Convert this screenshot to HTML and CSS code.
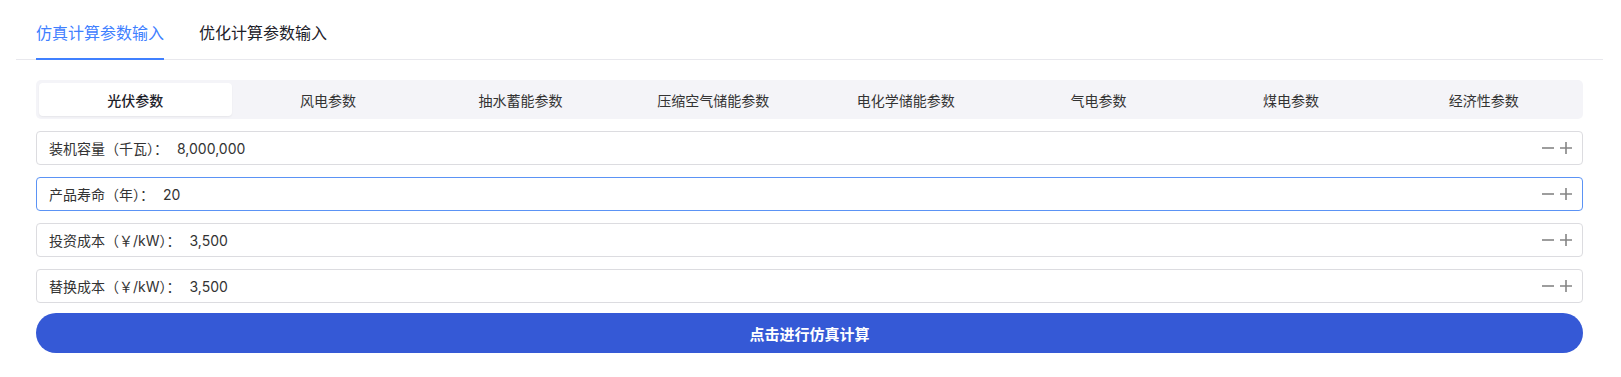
FILE: index.html
```html
<!DOCTYPE html>
<html lang="zh-CN">
<head>
    <meta charset="UTF-8">
    <meta name="viewport" content="width=device-width, initial-scale=1.0">
    <title>参数输入</title>
    <link rel="stylesheet" href="styles.css">
</head>
<body>
    <div class="page">
        <div class="tabs">
            <div class="tab active">仿真计算参数输入</div>
            <div class="tab">优化计算参数输入</div>
        </div>
        <div class="content">
            <div class="segmented">
                <div class="segment selected">光伏参数</div>
                <div class="segment">风电参数</div>
                <div class="segment">抽水蓄能参数</div>
                <div class="segment">压缩空气储能参数</div>
                <div class="segment">电化学储能参数</div>
                <div class="segment">气电参数</div>
                <div class="segment">煤电参数</div>
                <div class="segment">经济性参数</div>
            </div>

            <div class="field">
                <span class="label">装机容量（千瓦）：</span>
                <input class="value" type="text" value="8,000,000">
                <span class="stepper">
                    <svg width="12" height="12" viewBox="0 0 12 12"><path d="M0 6h12" stroke="#858585" stroke-width="1.6"/></svg>
                    <svg width="12" height="12" viewBox="0 0 12 12"><path d="M0 6h12M6 0v12" stroke="#858585" stroke-width="1.6"/></svg>
                </span>
            </div>
            <div class="field focused">
                <span class="label">产品寿命（年）：</span>
                <input class="value" type="text" value="20">
                <span class="stepper">
                    <svg width="12" height="12" viewBox="0 0 12 12"><path d="M0 6h12" stroke="#858585" stroke-width="1.6"/></svg>
                    <svg width="12" height="12" viewBox="0 0 12 12"><path d="M0 6h12M6 0v12" stroke="#858585" stroke-width="1.6"/></svg>
                </span>
            </div>
            <div class="field">
                <span class="label">投资成本（￥/kW）：</span>
                <input class="value" type="text" value="3,500">
                <span class="stepper">
                    <svg width="12" height="12" viewBox="0 0 12 12"><path d="M0 6h12" stroke="#858585" stroke-width="1.6"/></svg>
                    <svg width="12" height="12" viewBox="0 0 12 12"><path d="M0 6h12M6 0v12" stroke="#858585" stroke-width="1.6"/></svg>
                </span>
            </div>
            <div class="field">
                <span class="label">替换成本（￥/kW）：</span>
                <input class="value" type="text" value="3,500">
                <span class="stepper">
                    <svg width="12" height="12" viewBox="0 0 12 12"><path d="M0 6h12" stroke="#858585" stroke-width="1.6"/></svg>
                    <svg width="12" height="12" viewBox="0 0 12 12"><path d="M0 6h12M6 0v12" stroke="#858585" stroke-width="1.6"/></svg>
                </span>
            </div>

            <button class="submit">点击进行仿真计算</button>
        </div>
    </div>
</body>
</html>
```

FILE: styles.css
```css
body {
    margin: 0;
    font-family: Inter, "Noto Sans CJK SC", sans-serif;
    background-color: #ffffff;
    color: #1d2129;
}
.page {
    padding: 0 18px 0 16px;
}
.tabs {
    display: flex;
    gap: 35px;
    padding-left: 20px;
    border-bottom: 1px solid #e8e8ed;
}
.tab {
    font-size: 16px;
    line-height: 22px;
    padding: 22px 0 14px;
    border-bottom: 2px solid transparent;
    margin-bottom: -1px;
    color: #1d2129;
}
.tab.active {
    color: #4080ff;
    border-bottom-color: #4080ff;
}
.content {
    padding: 20px 20px 0 20px;
    display: flex;
    flex-direction: column;
}
.segmented {
    display: grid;
    grid-template-columns: repeat(8, 1fr);
    padding: 3px;
    background-color: #f4f4f8;
    border-radius: 5px;
    margin-bottom: 12px;
}
.segment {
    height: 33px;
    display: flex;
    align-items: center;
    justify-content: center;
    font-size: 14px;
    color: #333333;
    border-radius: 4px;
}
.segment.selected {
    background-color: #ffffff;
    font-weight: 500;
    color: #1d2129;
    box-shadow: 0 1px 2px rgba(0, 0, 0, 0.06);
}
.field {
    height: 32px;
    display: flex;
    align-items: center;
    border: 1px solid #dcdce0;
    border-radius: 4px;
    padding: 0 10px 0 12px;
    margin-bottom: 12px;
    font-size: 14px;
    color: #333333;
}
.field.focused {
    border-color: #5b93f5;
}
.label {
    white-space: nowrap;
}
.value {
    flex: 1;
    border: none;
    outline: none;
    background: transparent;
    font-family: inherit;
    font-size: 14px;
    color: #333333;
    padding: 0 3px 0 9px;
}
.stepper {
    display: flex;
    gap: 6px;
    align-items: center;
}
.stepper svg {
    display: block;
}
.submit {
    height: 40px;
    margin-top: -2px;
    border: none;
    border-radius: 20px;
    background-color: #3559d6;
    color: #ffffff;
    font-family: inherit;
    font-size: 15px;
    font-weight: 700;
    cursor: pointer;
}
```
